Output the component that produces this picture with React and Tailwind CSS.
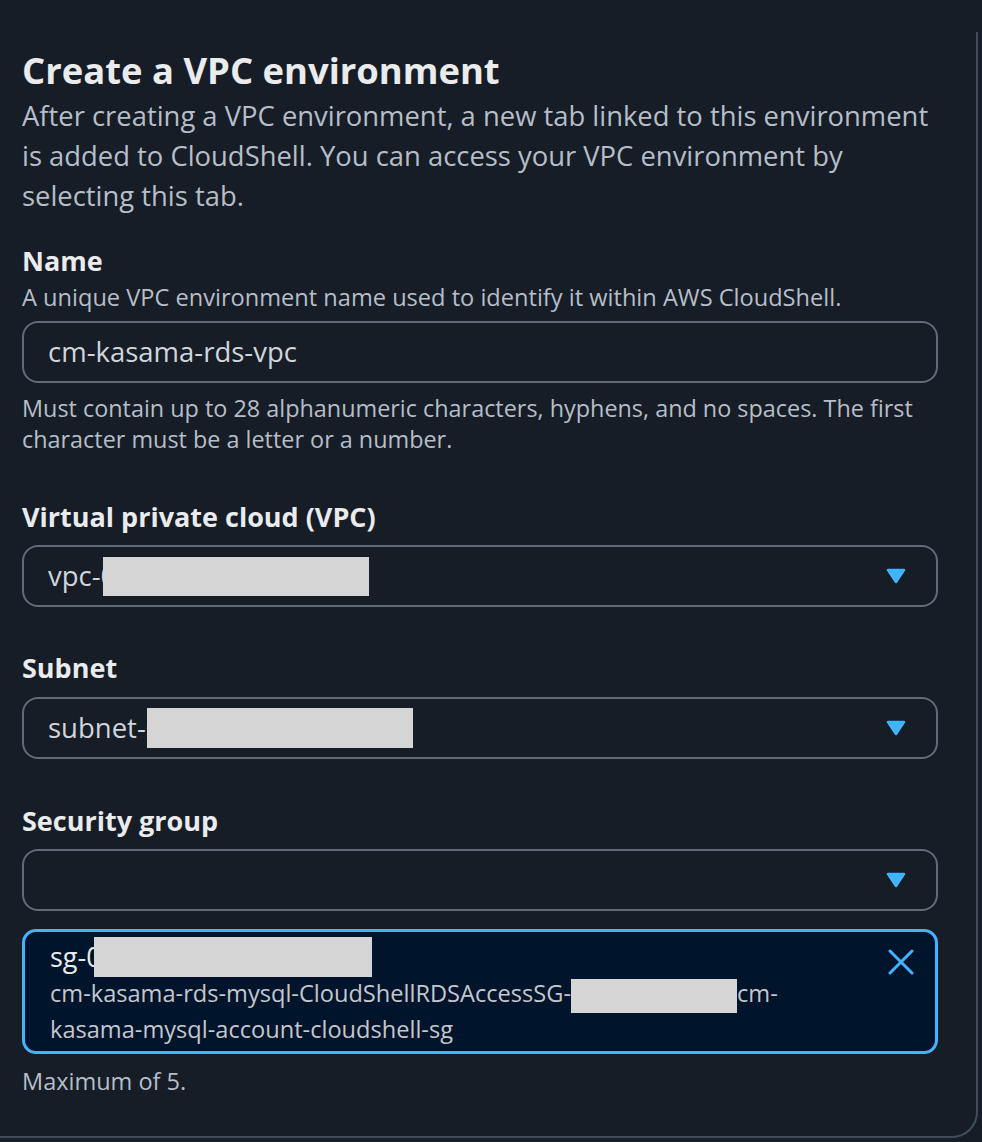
const Caret = () => (
    <svg width="20" height="16" viewBox="0 0 20 16" className="shrink-0">
        <path d="M2 2 L18 2 L10 14 Z" fill="#42b4ff" stroke="#42b4ff" strokeWidth="2.5" strokeLinejoin="round" />
    </svg>
);

const CloseIcon = () => (
    <svg width="26" height="26" viewBox="0 0 26 26" className="mt-[12px] shrink-0">
        <path d="M2 2 L24 24 M24 2 L2 24" stroke="#42b4ff" strokeWidth="3" strokeLinecap="round" />
    </svg>
);

// grey box hiding an id; it overlaps the first digit like in the screenshot
const Redacted = ({ className = '' }) => (
    <span className={`relative inline-block bg-[#d5d5d5] align-middle ${className}`}></span>
);

const Field = ({ label, className = '', children }) => (
    <div className={className}>
        <div className="text-[27px] font-bold leading-[36px] text-[#e9ebed]">{label}</div>
        {children}
    </div>
);

const SelectBox = ({ children, className = '' }) => (
    <div className={`flex h-[62px] items-center justify-between rounded-[16px] border-2 border-[#5f6b7a] pl-[24px] pr-[30px] ${className}`}>
        <div className="flex items-center text-[27.5px] text-[#d1d5db]">{children}</div>
        <Caret />
    </div>
);

const App = () => {
    return (
        <div className="min-h-screen bg-[#161d26] pt-[32px]" style={{ fontFamily: '"Open Sans", "Noto Sans", sans-serif' }}>
            <div className="h-[1106px] w-[978px] rounded-br-[26px] border-b-2 border-r-2 border-[#414d5c] pl-[22px] pr-[38px] pt-[16px]">
                <h1 className="text-[36.4px] font-bold leading-[44px] text-[#e9ebed]">Create a VPC environment</h1>
                <p className="mt-[4px] whitespace-nowrap text-[27.4px] leading-[40px] text-[#b6bec9]">
                    After creating a VPC environment, a new tab linked to this environment<br />
                    is added to CloudShell. You can access your VPC environment by<br />
                    selecting this tab.
                </p>

                <Field label="Name" className="mt-[27px]">
                    <p className="mt-[3px] whitespace-nowrap text-[23.6px] leading-[30px] text-[#b6bec9]">A unique VPC environment name used to identify it within AWS CloudShell.</p>
                    <div className="mt-[9px] flex h-[62px] items-center rounded-[16px] border-2 border-[#5f6b7a] pl-[24px] text-[27.5px] text-[#d1d5db]">
                        cm-kasama-rds-vpc
                    </div>
                    <p className="mt-[10px] whitespace-nowrap text-[23.4px] leading-[31px] text-[#b6bec9]">
                        Must contain up to 28 alphanumeric characters, hyphens, and no spaces. The first<br />
                        character must be a letter or a number.
                    </p>
                </Field>

                <Field label="Virtual private cloud (VPC)" className="mt-[44px]">
                    <SelectBox className="mt-[10px]">
                        <span>vpc-0</span>
                        <Redacted className="-ml-[13px] h-[39px] w-[266px]" />
                    </SelectBox>
                </Field>

                <Field label="Subnet" className="mt-[43px]">
                    <SelectBox className="mt-[11px]">
                        <span>subnet-0</span>
                        <Redacted className="-ml-[14px] h-[40px] w-[266px]" />
                    </SelectBox>
                </Field>

                <Field label="Security group" className="mt-[44px]">
                    <SelectBox className="mt-[10px]" />

                    <div className="mt-[18px] flex h-[125px] justify-between rounded-[14px] border-[3px] border-[#42b4ff] bg-[#00142b] pl-[25px] pr-[21px] pt-[5px]">
                        <div>
                            <div className="flex items-center text-[27px] leading-[36px] text-[#e9ebed]">
                                <span>sg-0</span>
                                <Redacted className="-ml-[8px] h-[40px] w-[278px]" />
                            </div>
                            <p className="whitespace-nowrap text-[23.6px] leading-[33px] text-[#c6c6cd]">
                                cm-kasama-rds-mysql-CloudShellRDSAccessSG-<Redacted className="h-[34px] w-[166px] align-[-8px]" />cm-<br />
                                kasama-mysql-account-cloudshell-sg
                            </p>
                        </div>
                        <CloseIcon />
                    </div>

                    <p className="mt-[12px] text-[23.5px] leading-[30px] text-[#b6bec9]">Maximum of 5.</p>
                </Field>
            </div>
        </div>
    );
};

export default App;
